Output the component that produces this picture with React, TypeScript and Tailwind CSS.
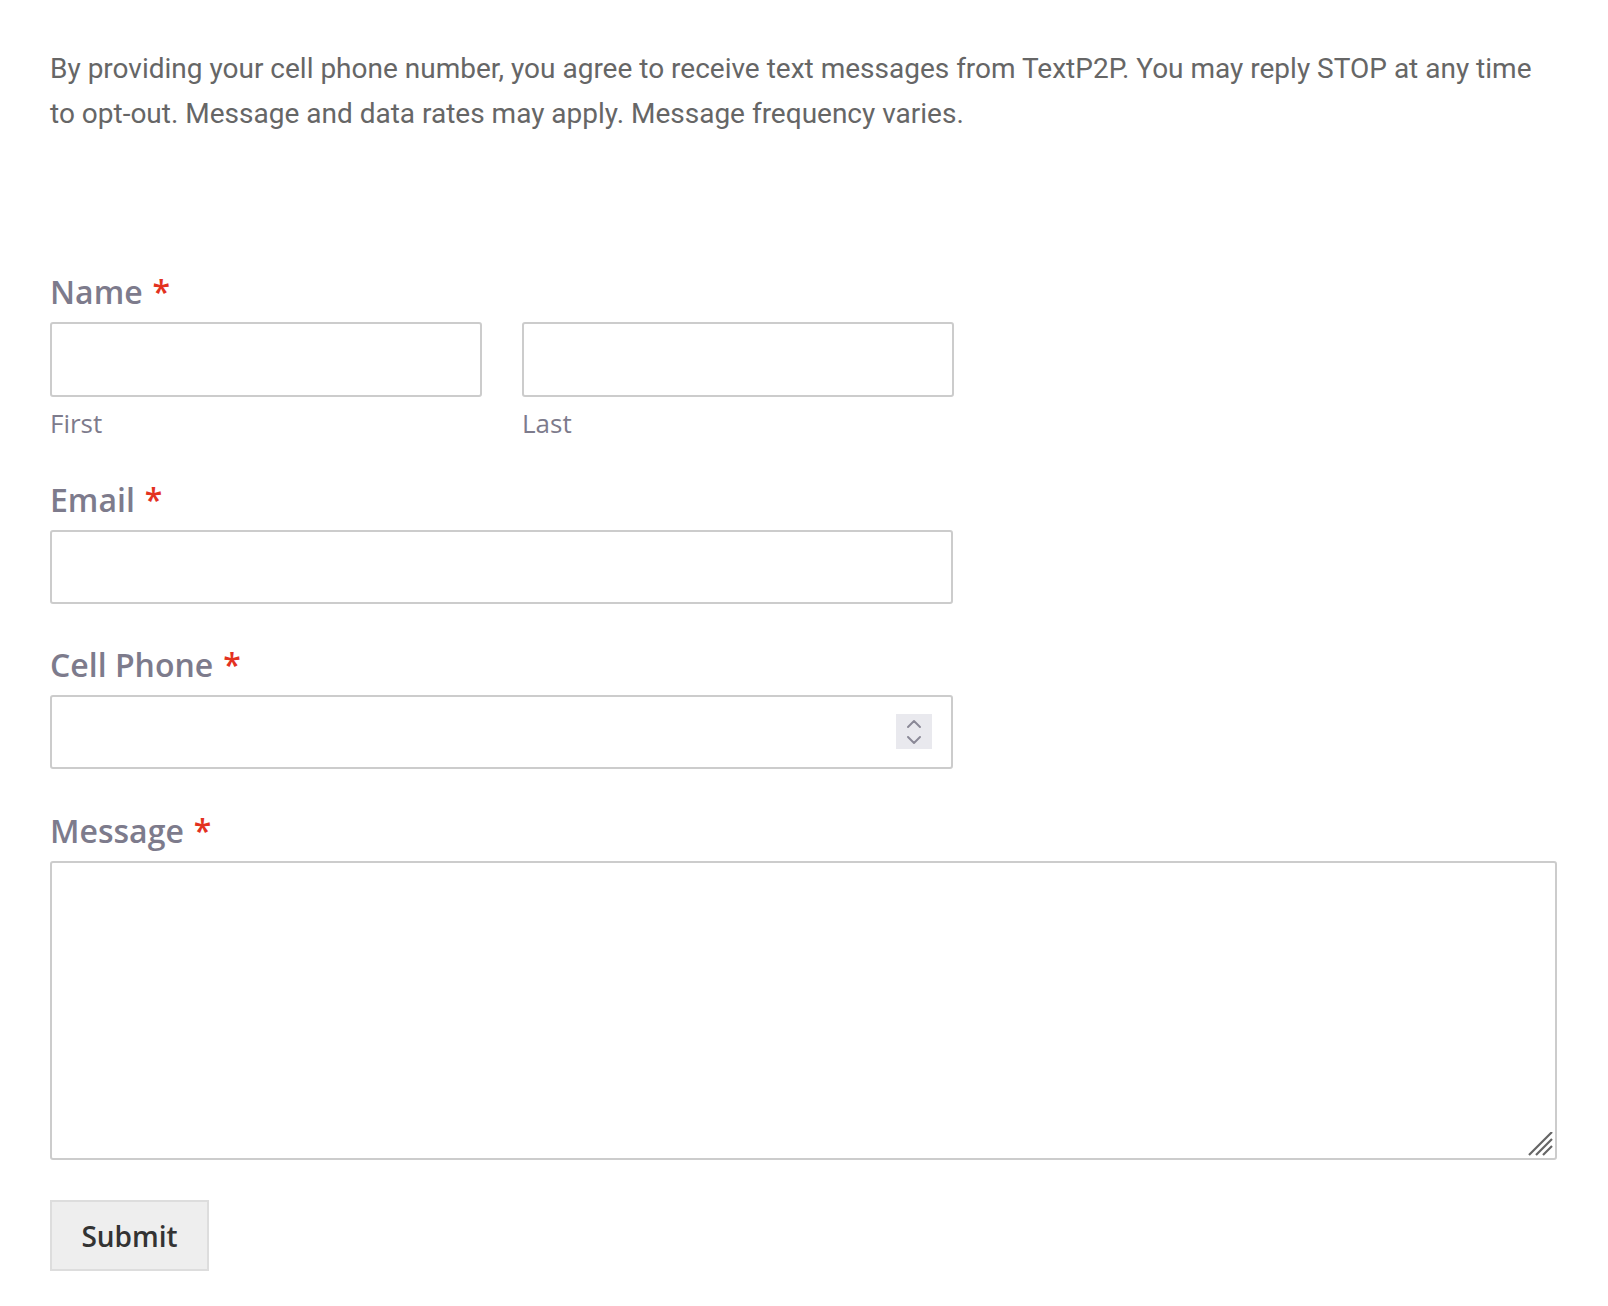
import { useState } from 'react';

function Req() {
  return <span className="ml-[10px] text-[#e3321f]">*</span>;
}

function FieldLabel({ text }: { text: string }) {
  return (
    <label className="mb-[10px] block h-[40px] text-[32px] font-semibold leading-[40px] text-[#7d7b8c]">
      {text}
      <Req />
    </label>
  );
}

const inputCls =
  'block w-full rounded-[3px] border-2 border-[#cccccc] bg-white px-3 text-[24px] text-[#333] outline-none';

export default function App() {
  const [phone, setPhone] = useState('');

  return (
    <div className="min-h-screen bg-white pl-[50px] pr-[51px] pt-[46px] font-['Open_Sans',sans-serif]">
      <p className="font-['Roboto',sans-serif] text-[28px] leading-[45px] text-[#666666]">
        By providing your cell phone number, you agree to receive text messages from TextP2P. You may reply STOP at
        any time to opt-out. Message and data rates may apply. Message frequency varies.
      </p>

      <form className="mt-[136px]" onSubmit={(e) => e.preventDefault()}>
        {/* Name */}
        <FieldLabel text="Name" />
        <div className="grid w-[904px] grid-cols-2 gap-x-[40px]">
          <div>
            <input type="text" className={`${inputCls} h-[75px]`} />
            <div className="mt-[10px] h-[32px] text-[26px] leading-[32px] text-[#7d7b8c]">First</div>
          </div>
          <div>
            <input type="text" className={`${inputCls} h-[75px]`} />
            <div className="mt-[10px] h-[32px] text-[26px] leading-[32px] text-[#7d7b8c]">Last</div>
          </div>
        </div>

        {/* Email */}
        <div className="mt-[41px] w-[903px]">
          <FieldLabel text="Email" />
          <input type="email" className={`${inputCls} h-[74px]`} />
        </div>

        {/* Cell phone */}
        <div className="mt-[41px] w-[903px]">
          <FieldLabel text="Cell Phone" />
          <div className="relative">
            <input
              type="text"
              inputMode="numeric"
              value={phone}
              onChange={(e) => setPhone(e.target.value.replace(/[^0-9]/g, ''))}
              className={`${inputCls} h-[74px] pr-16`}
            />
            <div className="absolute right-[21px] top-[19px] flex h-[35px] w-[36px] flex-col items-center justify-center gap-[8px] bg-[#e9e9ee]">
              <svg width="14" height="8" viewBox="0 0 14 8" fill="none">
                <path d="M1 7l6-6 6 6" stroke="#8a8896" strokeWidth="1.9" strokeLinecap="round" strokeLinejoin="round" />
              </svg>
              <svg width="14" height="8" viewBox="0 0 14 8" fill="none">
                <path d="M1 1l6 6 6-6" stroke="#8a8896" strokeWidth="1.9" strokeLinecap="round" strokeLinejoin="round" />
              </svg>
            </div>
          </div>
        </div>

        {/* Message */}
        <div className="mt-[42px]">
          <FieldLabel text="Message" />
          <div className="relative">
            <textarea className={`${inputCls} h-[299px] resize-none py-3`} />
            <svg
              className="pointer-events-none absolute bottom-[4px] right-[4px]"
              width="25"
              height="24"
              viewBox="0 0 25 24"
              fill="none"
            >
              <path d="M1 23L24 0M8 23L24 7M15 23L24 14" stroke="#666666" strokeWidth="2.2" />
            </svg>
          </div>
        </div>

        <button
          type="submit"
          className="mt-[40px] h-[71px] w-[159px] border-2 border-[#dddddd] bg-[#eeeeee] text-[28px] font-semibold text-[#333333]"
        >
          Submit
        </button>
      </form>
    </div>
  );
}
